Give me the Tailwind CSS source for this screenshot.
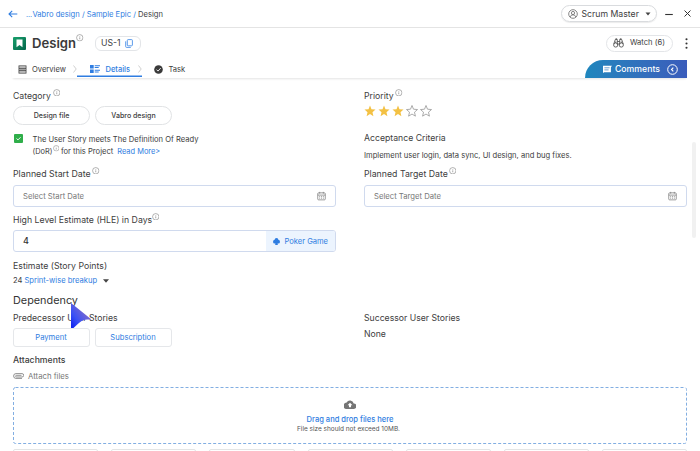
<!DOCTYPE html>
<html lang="en">
<head>
<meta charset="utf-8">
<title>Design - US-1</title>
<script src="https://cdn.jsdelivr.net/npm/@tailwindcss/browser@4"></script>
</head>
<body class="w-[700px] h-[451px] overflow-hidden bg-white font-['Inter','Liberation_Sans',sans-serif] text-[7.6px] leading-[12px] text-[#404040] whitespace-nowrap">
<svg class="hidden">
  <symbol id="info" viewBox="0 0 8 8"><circle cx="4" cy="4" r="3.4" fill="none" stroke="#7a7a7a" stroke-width=".6"/><path d="M4 3.6v2M4 2.2v.6" stroke="#7a7a7a" stroke-width=".7"/></symbol>
  <symbol id="cal" viewBox="0 0 10 10"><rect x=".8" y="1.5" width="8.4" height="7.8" rx="1" fill="none" stroke="#777" stroke-width=".8"/><path d="M.8 4h8.4M3 .4v2M7 .4v2" stroke="#777" stroke-width=".8"/><path d="M2.5 5.7h1M4.5 5.7h1M6.5 5.7h1M2.5 7.4h1M4.5 7.4h1M6.5 7.4h1" stroke="#777" stroke-width=".9"/></symbol>
  <symbol id="star" viewBox="0 0 12 12"><path d="M6 .5l1.500 3.700 4 .35-3 2.650.9 3.950L6 9.050l-3.400 2.100.9-3.950-3-2.650 4-.35z"/></symbol>
</svg>

<header class="h-[28px] pl-[8px] pr-[9px] flex items-center border-b border-[#e4e4e4]">
  <svg class="w-[10px] h-[8px]" viewBox="0 0 10 8" fill="none" stroke="#2f7de1" stroke-width="1.1"><path d="M9.300 4H1M4.200.8L1 4l3.200 3.200"/></svg>
  <nav class="ml-[8px] pt-[2px] text-[#2f7de1]"><span class="inline-block w-[6.500px] text-[7px]">...</span>Vabro design / Sample Epic / <span class="text-[#404040]">Design</span></nav>
  <button class="ml-auto w-[96px] h-[17px] rounded-full border border-[#d9dbde] shadow-[0_1px_1px_rgba(0,0,0,0.08)] flex items-center pl-[5.500px] text-[8.700px]">
    <svg class="w-[10px] h-[10px]" viewBox="0 0 10 10" fill="none" stroke="#666" stroke-width=".8"><circle cx="5" cy="5" r="4.300"/><circle cx="5" cy="4" r="1.600"/><path d="M2.200 8.100c.3-1.600 1.300-2.200 2.800-2.200s2.500.6 2.800 2.200"/></svg>
    <span class="ml-[4px]">Scrum Master</span>
    <svg class="ml-[6px] w-[6px] h-[4px]" viewBox="0 0 6 4"><path d="M.5.5h5L3 3.400z" fill="#444"/></svg>
  </button>
  <svg class="ml-[8px] w-[8px] h-[8px]" viewBox="0 0 8 8"><path d="M.2 4.500h7.600" stroke="#333" stroke-width="1.100"/></svg>
  <svg class="ml-[11px] w-[7px] h-[7px]" viewBox="0 0 7 7"><path d="M.5.5l6 6M6.500.5l-6 6" stroke="#333" stroke-width="1"/></svg>
</header>

<section class="h-[32px] pb-[2px] pl-[13px] pr-[12px] flex items-center">
  <svg class="w-[13px] h-[13px]" viewBox="0 0 13 13"><defs><linearGradient id="g" x1="0" y1="0" x2="1" y2="1"><stop stop-color="#18a06c"/><stop offset="1" stop-color="#04664b"/></linearGradient></defs><rect width="13" height="13" rx="1" fill="url(#g)"/><path d="M3.500 2.600h6v7.700L6.500 8l-3 2.300z" fill="#fff"/></svg>
  <h1 class="ml-[6px] w-[44px] text-[13.100px] leading-[16px] font-semibold text-[#3a3a3a]">Design</h1>
  <svg class="w-[7.500px] h-[7.500px] mb-[10px]"><use href="#info"/></svg>
  <div class="ml-[11px] w-[46px] h-[15px] rounded-[6px] border border-[#e3e5e8] flex items-center pl-[5.500px] text-[8.700px]">US-1
    <svg class="ml-[4px] w-[8px] h-[9px]" viewBox="0 0 8 9" fill="none" stroke="#4a90e8" stroke-width=".9"><rect x="2.300" y=".6" width="5.100" height="6.200" rx=".8"/><path d="M.7 2.300v5.300c0 .5.3.8.8.8h4.300"/></svg>
  </div>
  <div class="ml-auto w-[67px] h-[17px] rounded-full border border-[#e3e5e8] flex items-center pl-[6px]">
    <svg class="w-[11px] h-[10px]" viewBox="0 0 11 10" fill="none" stroke="#444" stroke-width=".8"><circle cx="2.700" cy="7" r="2.100"/><circle cx="8.300" cy="7" r="2.100"/><path d="M.8 6L2.300 1.500h2v5M10.200 6L8.700 1.500h-2v5M4.300 3.500h2.400M4.700 6h1.600M2.500.8h1.600M6.900.8h1.600M2.700 3.500v1.400M8.300 3.500v1.400"/></svg>
    <span class="ml-[6px]">Watch (6)</span>
  </div>
  <svg class="ml-[12px] w-[3px] h-[11px]" viewBox="0 0 3 11" fill="#333"><circle cx="1.500" cy="1.300" r="1.050"/><circle cx="1.500" cy="5.500" r="1.050"/><circle cx="1.500" cy="9.700" r="1.050"/></svg>
</section>

<nav class="ml-[12px] mr-[13px] h-[18px] flex items-stretch shadow-[0_2px_2px_-1px_rgba(0,0,0,0.11)]">
  <div class="w-[65px] pl-[6px] flex items-center">
    <svg class="w-[9px] h-[9px]" viewBox="0 0 9 9"><rect x="1" y=".9" width="7" height="7.200" fill="none" stroke="#444" stroke-width=".9"/><path d="M1 3.300h7M1 5.700h7" stroke="#444" stroke-width="1"/><path d="M1 2.100h7M1 4.500h7M1 6.900h7" stroke="#999" stroke-width=".9"/></svg>
    <span class="ml-[5px] pt-[1px]">Overview</span>
    <svg class="ml-auto w-[4px] h-[8px]" viewBox="0 0 4 8" fill="none" stroke="#bbb" stroke-width=".7"><path d="M.5.5L3.200 4 .5 7.500"/></svg>
  </div>
  <div class="w-[65px] h-[17px] pl-[13px] pt-[2px] flex items-center border-b border-[#2f7de1] shadow-[inset_0_-0.500px_0_#2f7de1] text-[#2f7de1] font-medium">
    <svg class="w-[10px] h-[8px]" viewBox="0 0 10 8" fill="#2f7de1"><path d="M0 0h3.700v3.500H0zM0 4.500h3.700V8H0zM4.700.3H10v1H4.700zM4.700 2.100h4v1h-4zM4.700 4.800H10v1H4.700zM4.700 6.600h4v1h-4z"/></svg>
    <span class="ml-[5.500px] pt-[1px] text-[7.500px]">Details</span>
    <svg class="ml-auto w-[4px] h-[8px]" viewBox="0 0 4 8" fill="none" stroke="#bbb" stroke-width=".7"><path d="M.5.5L3.200 4 .5 7.500"/></svg>
  </div>
  <div class="pl-[12px] flex items-center">
    <svg class="w-[9px] h-[9px]" viewBox="0 0 9 9"><circle cx="4.500" cy="4.500" r="4.300" fill="#3a3a3a"/><path d="M2.500 4.600L4 6.100l2.700-3" fill="none" stroke="#fff" stroke-width=".9"/></svg>
    <span class="ml-[5.500px] pt-[1px]">Task</span>
  </div>
  <div class="ml-auto w-[102px] h-[18px] rounded-tl-[18px] bg-gradient-to-r from-[#1e86bd] to-[#3a5cbb] flex items-center pl-[18px] text-white">
    <svg class="w-[9px] h-[8px]" viewBox="0 0 9 8"><path d="M0 .8h9L7.900 2.300v4.900H1.200L0 8z" fill="#fff"/><path d="M1.400 2.800h5.200M1.400 4.900h4.200" stroke="#2c7abc" stroke-width=".7"/></svg>
    <span class="ml-[3px] text-[8.700px] font-medium">Comments</span>
    <svg class="ml-[7px] w-[11px] h-[11px]" viewBox="0 0 11 11" fill="none" stroke="#fff"><circle cx="5.500" cy="5.500" r="4.800" stroke-width="1"/><path d="M6.300 3.700L4.500 5.500l1.800 1.800" stroke-width="1.100"/></svg>
  </div>
</nav>

<main class="relative pt-[10px] pl-[13px] pr-[13px]">
  <div class="grid grid-cols-[323px_323px] gap-x-[28px]">
    <div>
      <div class="h-[16px] flex items-center text-[8.700px]">Category<svg class="ml-[2px] mb-[7px] w-[7.500px] h-[7.500px]"><use href="#info"/></svg></div>
      <div class="mt-[2px] flex gap-[5px] text-[7.050px]">
        <div class="w-[77px] h-[19px] rounded-full border border-[#e1e3e5] flex items-center justify-center font-medium">Design file</div>
        <div class="w-[77px] h-[19px] rounded-full border border-[#e1e3e5] flex items-center justify-center font-medium">Vabro design</div>
      </div>
      <div class="mt-[9px] flex h-[26px]">
        <svg class="ml-[1px] w-[9px] h-[9px]" viewBox="0 0 9 9"><rect width="9" height="9" rx="1" fill="#2fae4a"/><path d="M2.500 4.500l1.500 1.400 2.600-2.700" stroke="#fff" stroke-width=".9" fill="none"/></svg>
        <div class="ml-[9.500px]">The User Story meets The Definition Of Ready
          <div class="flex items-center h-[12px]"><span class="text-[7.400px]">(DoR)</span><svg class="mb-[7px] ml-[.5px] w-[6.500px] h-[6.500px]"><use href="#info" width="6.500" height="6.500"/></svg><span class="ml-[1.500px]">for this Project</span><span class="ml-[4px] text-[7.450px] text-[#2f7de1]">Read More&gt;</span></div>
        </div>
      </div>
    </div>
    <div>
      <div class="h-[16px] flex items-center text-[8.700px]">Priority<svg class="ml-[1.500px] mb-[7px] w-[7.500px] h-[7.500px]"><use href="#info"/></svg></div>
      <div class="flex gap-[2px] mt-px">
        <svg class="w-[12px] h-[12px] fill-[#f3c144]"><use href="#star"/></svg>
        <svg class="w-[12px] h-[12px] fill-[#f3c144]"><use href="#star"/></svg>
        <svg class="w-[12px] h-[12px] fill-[#f3c144]"><use href="#star"/></svg>
        <svg class="w-[12px] h-[12px] fill-none stroke-[#888] [stroke-width:.7]"><use href="#star"/></svg>
        <svg class="w-[12px] h-[12px] fill-none stroke-[#888] [stroke-width:.7]"><use href="#star"/></svg>
      </div>
      <div class="mt-[15px] h-[12px] text-[8.700px]">Acceptance Criteria</div>
      <div class="mt-[6px] h-[12px]">Implement user login, data sync, UI design, and bug fixes.</div>
    </div>
    <div class="pt-[4px]">
      <div class="h-[16px] flex items-center text-[8.800px]">Planned Start Date<svg class="ml-[1.500px] mb-[7px] w-[7.500px] h-[7.500px]"><use href="#info"/></svg></div>
      <div class="mt-[3px] h-[22px] rounded-[3px] border border-[#d0daee] flex items-center justify-between pl-[9px] pr-[9px] text-[7.700px] text-[#777]"><span class="pt-[2px]">Select Start Date</span><svg class="w-[9px] h-[10px]"><use href="#cal"/></svg></div>
      <div class="mt-[5px] h-[16px] flex items-center text-[8.720px]">High Level Estimate (HLE) in Days<svg class="-ml-[.5px] mb-[7px] w-[7.500px] h-[7.500px]"><use href="#info"/></svg></div>
      <div class="mt-[2px] h-[22px] rounded-[3px] border border-[#d0daee] flex items-stretch overflow-hidden">
        <div class="flex-1 flex items-center pl-[9px] text-[9px] font-medium text-[#333]">4</div>
        <div class="w-[69px] bg-[#ecf4fe] flex items-center pl-[7px] text-[#2f7de1] text-[7.550px]"><svg class="w-[7px] h-[7px] mr-[4.500px]" viewBox="0 0 7 7" fill="#2f7de1"><circle cx="3.500" cy="2" r="1.900"/><circle cx="1.900" cy="3.700" r="1.900"/><circle cx="5.100" cy="3.700" r="1.900"/><path d="M2.600 3h1.800l.4 3.900H2.200z"/></svg><span class="pt-px">Poker Game</span></div>
      </div>
    </div>
    <div class="pt-[4px]">
      <div class="h-[16px] flex items-center text-[8.750px]">Planned Target Date<svg class="ml-[1px] mb-[7px] w-[7.500px] h-[7.500px]"><use href="#info"/></svg></div>
      <div class="mt-[3px] h-[22px] rounded-[3px] border border-[#d0daee] flex items-center justify-between pl-[9px] pr-[9px] text-[7.700px] text-[#777]"><span class="pt-[2px]">Select Target Date</span><svg class="w-[9px] h-[10px]"><use href="#cal"/></svg></div>
    </div>
  </div>

  <div class="mt-[8px] h-[12px] text-[8.750px]">Estimate (Story Points)</div>
  <div class="mt-[3px] h-[12px] flex items-center">24<span class="ml-[2px] text-[#2f7de1]">Sprint-wise breakup</span><svg class="ml-[6px] w-[6px] h-[4px]" viewBox="0 0 6 4"><path d="M0 .2h6L3 3.800z" fill="#444"/></svg></div>
  <h2 class="mt-[5px] h-[16px] text-[10.850px] leading-[16px] text-[#333]">Dependency</h2>
  <div class="mt-[4px] grid grid-cols-[323px_323px] gap-x-[28px] text-[8.680px]">
    <div>Predecessor User Stories
      <div class="mt-[4px] flex gap-[5px] text-[7.640px] text-[#2f7de1]">
        <div class="w-[77px] h-[19px] rounded-[3px] border border-[#e5e7ea] flex items-center justify-center pr-px">Payment</div>
        <div class="w-[77px] h-[19px] rounded-[3px] border border-[#e5e7ea] flex items-center justify-center pr-px">Subscription</div>
      </div>
    </div>
    <div>Successor User Stories<div class="mt-[3.500px]">None</div></div>
  </div>
  <div class="mt-[7px] h-[12px] text-[8.700px] font-medium">Attachments</div>
  <div class="mt-[4px] h-[12px] flex items-center text-[7.770px] text-[#777]"><svg class="mr-[4px] w-[11px] h-[6px]" viewBox="0 0 11 6" fill="none" stroke="#777" stroke-width=".8"><path d="M9 5.400H3A2.400 2.400 0 0 1 3 .6h6a1.600 1.600 0 0 1 0 3.400H3.500a.8.8 0 0 1 0-1.700H8.500"/></svg>Attach files</div>
  <div class="mt-[5px] h-[57px] flex flex-col items-center relative">
    <svg class="absolute inset-0 w-full h-full" viewBox="0 0 674 57" fill="none"><rect x=".5" y=".5" width="673" height="56" rx="2" stroke="#82aee2" stroke-dasharray="3 2"/></svg>
    <svg class="mt-[13px] w-[12px] h-[9px]" viewBox="0 0 12 9"><path d="M9.700 3.500A3.800 3.800 0 0 0 2.600 2.600 3.200 3.200 0 0 0 3 9h6.500a2.700 2.700 0 0 0 .2-5.500z" fill="#757575"/><path d="M6 2.700l2.400 2.500H7v2.100H5V5.200H3.600z" fill="#fff"/></svg>
    <div class="mt-[5px] h-[11px] leading-[11px] text-[7.560px] font-medium text-[#2f7de1]">Drag and drop files here</div>
    <div class="h-[8px] leading-[8px] text-[6.460px] text-[#555] -ml-[3px]">File size should not exceed 10MB.</div>
  </div>
  <div class="mt-[5px] flex gap-[13px] h-[20px]">
    <div class="w-[85px] rounded-t-[2px] border border-[#e3e5e5]"></div>
    <div class="w-[85px] rounded-t-[2px] border border-[#e3e5e5]"></div>
    <div class="w-[86px] rounded-t-[2px] border border-[#e3e5e5]"></div>
    <div class="w-[85px] rounded-t-[2px] border border-[#e3e5e5]"></div>
    <div class="w-[85px] rounded-t-[2px] border border-[#e3e5e5]"></div>
    <div class="w-[85px] rounded-t-[2px] border border-[#e3e5e5]"></div>
    <div class="w-[85px] rounded-t-[2px] border border-[#e3e5e5]"></div>
  </div>

  <div class="absolute left-[692px] top-[64px] w-[4px] h-[96px] rounded-full bg-[#f1f1f1]"></div>
  <svg class="absolute left-[71px] top-[225px] w-[21px] h-[26px]" viewBox="0 0 21 26"><defs><linearGradient id="c" x1="0" y1=".9" x2=".8" y2=".2"><stop stop-color="#1226f0"/><stop offset=".35" stop-color="#3b50f5"/><stop offset="1" stop-color="#8a6fc4"/></linearGradient></defs><path d="M0 0l20.500 16.500c-8-.3-10 .5-18 8.500L0 25z" fill="url(#c)"/></svg>
</main>
</body>
</html>
